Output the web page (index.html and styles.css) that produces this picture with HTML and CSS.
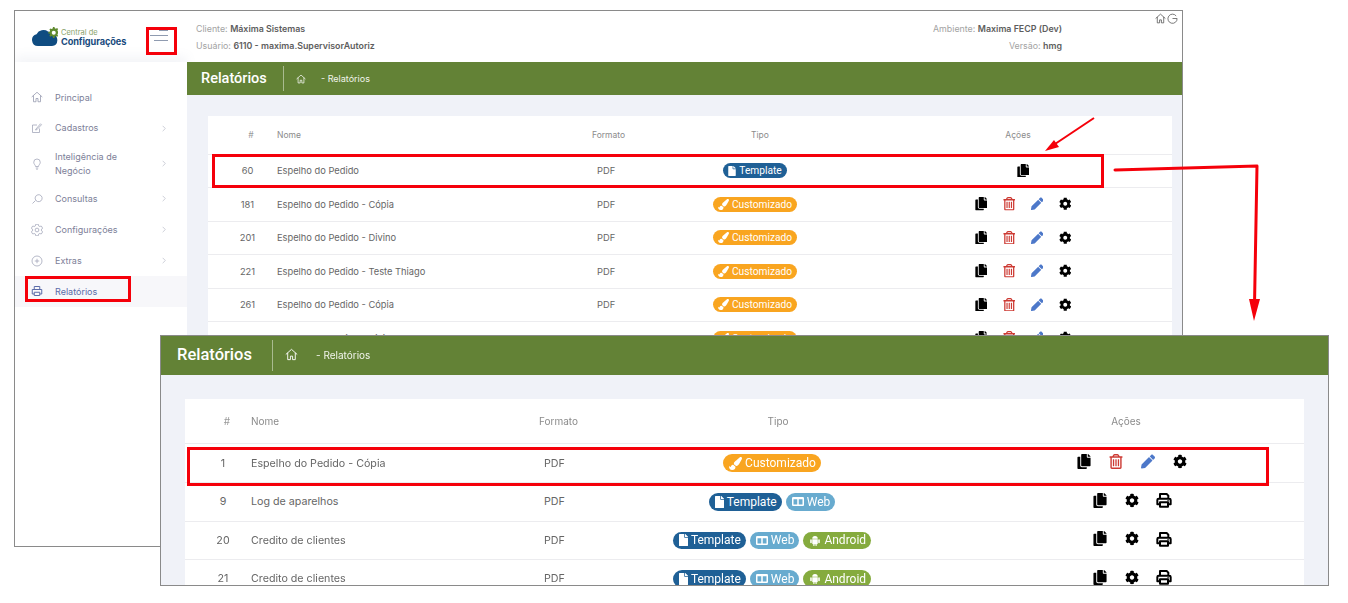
FILE: index.html
```html
<!DOCTYPE html>
<html lang="pt-BR">
<head>
<meta charset="utf-8">
<title>Relatórios</title>
<link rel="stylesheet" href="styles.css">
</head>
<body>
<svg class="defs" aria-hidden="true">
  <symbol id="i-copy" viewBox="0 0 448 512"><path d="M320 448v40c0 13.255-10.745 24-24 24H24c-13.255 0-24-10.745-24-24V120c0-13.255 10.745-24 24-24h72v296c0 30.879 25.121 56 56 56h168zm0-344V0H152c-13.255 0-24 10.745-24 24v368c0 13.255 10.745 24 24 24h272c13.255 0 24-10.745 24-24V128H344c-13.2 0-24-10.8-24-24zm120.971-31.029L375.029 7.029A24 24 0 0 0 358.059 0H352v96h96v-6.059a24 24 0 0 0-7.029-16.97z"/></symbol>
  <symbol id="i-trash" viewBox="0 0 448 512"><path d="M432 80h-82.41l-34-56.7A48 48 0 0 0 274.41 0H173.59a48 48 0 0 0-41.16 23.3L98.41 80H16A16 16 0 0 0 0 96v16a16 16 0 0 0 16 16h16v336a48 48 0 0 0 48 48h288a48 48 0 0 0 48-48V128h16a16 16 0 0 0 16-16V96a16 16 0 0 0-16-16zM171.84 50.91A6 6 0 0 1 177 48h94a6 6 0 0 1 5.15 2.91L293.61 80H154.39zM368 464H80V128h288z"/><rect x="118" y="176" width="44" height="240" rx="12"/><rect x="202" y="176" width="44" height="240" rx="12"/><rect x="286" y="176" width="44" height="240" rx="12"/></symbol>
  <symbol id="i-pencil" viewBox="0 0 512 512"><path d="M497.9 142.1l-46.1 46.1c-4.7 4.7-12.3 4.7-17 0l-111-111c-4.7-4.7-4.7-12.3 0-17l46.1-46.1c18.7-18.7 49.1-18.7 67.9 0l60.1 60.1c18.8 18.7 18.8 49.1 0 67.9zM284.2 99.8L21.6 362.4.4 483.9c-2.9 16.4 11.4 30.6 27.8 27.8l121.5-21.3 262.6-262.6c4.7-4.7 4.7-12.3 0-17l-111-111c-4.8-4.7-12.4-4.7-17.1 0z"/></symbol>
  <symbol id="i-cog" viewBox="0 0 512 512"><path d="M487.4 315.7l-42.6-24.6c4.3-23.2 4.3-47 0-70.2l42.6-24.6c4.9-2.8 7.1-8.6 5.5-14-11.1-35.6-30-67.8-54.7-94.6-3.8-4.1-10-5.1-14.8-2.3L380.8 110c-17.9-15.4-38.5-27.3-60.8-35.1V25.8c0-5.6-3.9-10.5-9.4-11.7-36.7-8.2-74.3-7.8-109.2 0-5.5 1.2-9.4 6.1-9.4 11.7V75c-22.2 7.9-42.8 19.8-60.8 35.1L88.7 85.5c-4.9-2.8-11-1.9-14.8 2.3-24.7 26.7-43.6 58.9-54.7 94.6-1.7 5.4.6 11.2 5.5 14L67.3 221c-4.3 23.2-4.3 47 0 70.2l-42.6 24.6c-4.9 2.8-7.1 8.6-5.5 14 11.1 35.6 30 67.8 54.7 94.6 3.8 4.1 10 5.1 14.8 2.3l42.6-24.6c17.9 15.4 38.5 27.3 60.8 35.1v49.2c0 5.6 3.9 10.5 9.4 11.7 36.7 8.2 74.3 7.8 109.2 0 5.5-1.2 9.4-6.1 9.4-11.7v-49.2c22.2-7.9 42.8-19.8 60.8-35.1l42.6 24.6c4.9 2.8 11 1.9 14.8-2.3 24.7-26.7 43.6-58.9 54.7-94.6 1.5-5.5-.7-11.3-5.6-14.1zM256 336c-44.1 0-80-35.9-80-80s35.9-80 80-80 80 35.9 80 80-35.9 80-80 80z"/></symbol>
  <symbol id="i-print" viewBox="0 0 24 24"><path fill="none" stroke="currentColor" stroke-width="3" stroke-linejoin="round" d="M6 10V3h10l2.500 2.500V10M5.500 18.500H2V12a2 2 0 0 1 2-2h16a2 2 0 0 1 2 2v6.500h-3.500M6 15.500h12v6.500H6z"/><rect x="17" y="12" width="2.200" height="2.200" rx="1"/></symbol>
  <symbol id="i-file" viewBox="0 0 384 512"><path d="M224 136V0H24C10.7 0 0 10.7 0 24v464c0 13.3 10.7 24 24 24h336c13.3 0 24-10.7 24-24V160H248c-13.2 0-24-10.8-24-24zm160-14.1v6.1H256V0h6.1c6.4 0 12.5 2.5 17 7l97.9 98c4.5 4.5 7 10.6 7 16.9z"/></symbol>
  <symbol id="i-brush" viewBox="0 0 512 512"><path d="M167.02 309.34c-40.12 2.58-76.53 17.86-97.19 72.3-2.35 6.21-8 9.98-14.59 9.98-11.11 0-45.46-27.67-55.25-34.35C0 439.62 37.93 512 128 512c75.86 0 128-43.77 128-120.19 0-3.11-.65-6.08-.97-9.13l-88.01-73.34zM457.89 0c-15.16 0-29.37 6.71-40.21 16.45C213.27 199.05 192 203.34 192 257.09c0 13.7 3.25 26.76 8.73 38.7l63.82 53.18c7.21 1.8 14.64 3.03 22.39 3.03 62.11 0 98.11-45.47 211.16-256.46 7.38-14.35 13.9-29.85 13.9-45.99C512 20.64 486 0 457.89 0z"/></symbol>
  <symbol id="i-cols" viewBox="0 0 16 14"><path fill-rule="evenodd" d="M1.5 1h13A1.5 1.5 0 0 1 16 2.500v9a1.500 1.500 0 0 1-1.500 1.500h-13A1.500 1.500 0 0 1 0 11.500v-9A1.500 1.500 0 0 1 1.500 1zM2 4v7h5V4zm7 0v7h5V4z"/></symbol>
  <symbol id="i-android" viewBox="0 0 16 16"><path d="M4 5.500a4 4 0 0 1 8 0zM4 6.300h8v6a1 1 0 0 1-1 1h-.6V16H8.800v-2.700H7.200V16H5.600v-2.700H5a1 1 0 0 1-1-1z"/><rect x="1" y="6" width="2.300" height="6" rx="1.150"/><rect x="12.700" y="6" width="2.300" height="6" rx="1.150"/></symbol>
  <symbol id="i-home" viewBox="0 0 24 24"><path fill="none" stroke="currentColor" stroke-width="1.700" stroke-linejoin="round" stroke-linecap="round" d="M2 11.500 12 2.500l10 9M5 9.500V21.500h5v-6.500h4v6.500h5V9.500"/></symbol>
  <symbol id="i-chev" viewBox="0 0 6 10"><path fill="none" stroke="currentColor" stroke-width="1" d="M1 1l4 4-4 4"/></symbol>
</svg>

<main class="stage">
  <section class="win win-back">
    <header class="top">
      <div class="logo">
        <svg class="cloud" viewBox="0 0 26 19"><path fill="#0f4c81" d="M6 19a6 6 0 0 1-1.500-11.800A8 8 0 0 1 16 4.500a5.500 5.500 0 0 1 4.500 3 5.800 5.800 0 0 1-.5 11.500z"/><g transform="translate(15 0)"><path fill="#5f8a2e" d="M6 0h1.500l.3 1.300 1.100.5 1.200-.7 1 1-.7 1.200.5 1.100 1.300.3v1.500l-1.300.3-.5 1.100.7 1.200-1 1-1.200-.7-1.100.5-.3 1.300H6l-.3-1.300-1.100-.5-1.200.7-1-1 .7-1.200-.5-1.100L1.300 6.500V5l1.300-.3.5-1.100-.7-1.200 1-1 1.200.7 1.100-.5z"/><circle cx="6.750" cy="5.750" r="2" fill="#fff"/></g></svg>
        <div class="logo-text"><span class="logo-small">Central de</span><strong class="logo-big">Configurações</strong></div>
      </div>
      <div class="burger"><i class="b1"></i><i class="b2"></i><i class="b3"></i></div>
      <div class="info">
        <p>Cliente: <b>Máxima Sistemas</b></p>
        <p>Usuário: <b>6110 - maxima.SupervisorAutoriz</b></p>
      </div>
      <div class="info info-right">
        <p>Ambiente: <b>Maxima FECP (Dev)</b></p>
        <p>Versão: <b>hmg</b></p>
      </div>
      <div class="top-icons">
        <svg class="ti"><use href="#i-home"/></svg>
        <svg class="ti" viewBox="0 0 24 24"><path fill="none" stroke="currentColor" stroke-width="1.700" d="M20 6.500A10 10 0 1 0 22 12H12"/></svg>
      </div>
    </header>
    <div class="body">
      <nav class="side">
        <a class="item"><svg class="si"><use href="#i-home"/></svg><span>Principal</span></a>
        <a class="item"><svg class="si" viewBox="0 0 24 24"><path fill="none" stroke="currentColor" stroke-width="1.500" d="M17 13v8H3V6h9M10 14l-1 2 2.500-.5L21 5.500 19 3.500z"/></svg><span>Cadastros</span><svg class="chev"><use href="#i-chev"/></svg></a>
        <a class="item item-tall"><svg class="si" viewBox="0 0 24 24"><path fill="none" stroke="currentColor" stroke-width="1.500" d="M9 17c0-3-3.500-4.500-3.500-8.500a6.500 6.500 0 0 1 13 0C18.500 12.500 15 14 15 17zM9.500 20h5M10.500 22.500h3"/></svg><span>Inteligência de Negócio</span><svg class="chev"><use href="#i-chev"/></svg></a>
        <a class="item"><svg class="si" viewBox="0 0 24 24"><path fill="none" stroke="currentColor" stroke-width="1.500" d="M10 15a7 7 0 1 0 4-11.500A7 7 0 0 0 10 15zM9 15l-6 6"/></svg><span>Consultas</span><svg class="chev"><use href="#i-chev"/></svg></a>
        <a class="item"><svg class="si" viewBox="0 0 512 512"><path fill="none" stroke="currentColor" stroke-width="32" d="M487.4 315.7l-42.6-24.6c4.300-23.200 4.300-47 0-70.200l42.600-24.600c4.900-2.800 7.100-8.600 5.500-14-11.100-35.600-30-67.800-54.700-94.600-3.800-4.100-10-5.100-14.800-2.300L380.800 110c-17.900-15.400-38.500-27.300-60.800-35.100V25.800c0-5.600-3.900-10.500-9.400-11.700-36.700-8.200-74.300-7.800-109.200 0-5.500 1.200-9.400 6.100-9.400 11.700V75c-22.200 7.900-42.800 19.800-60.800 35.100L88.700 85.500c-4.900-2.800-11-1.900-14.800 2.300-24.700 26.700-43.600 58.900-54.700 94.600-1.700 5.400.6 11.200 5.500 14L67.300 221c-4.300 23.200-4.300 47 0 70.200l-42.600 24.600c-4.900 2.800-7.100 8.600-5.500 14 11.100 35.600 30 67.800 54.700 94.600 3.800 4.100 10 5.100 14.800 2.300l42.600-24.600c17.900 15.400 38.500 27.300 60.800 35.100v49.200c0 5.600 3.900 10.500 9.400 11.700 36.700 8.200 74.300 7.800 109.200 0 5.500-1.200 9.400-6.100 9.400-11.700v-49.200c22.200-7.900 42.800-19.800 60.800-35.100l42.600 24.600c4.900 2.800 11 1.900 14.800-2.300 24.700-26.700 43.600-58.900 54.700-94.600 1.500-5.500-.7-11.300-5.600-14.100z"/><circle cx="256" cy="256" r="80" fill="none" stroke="currentColor" stroke-width="32"/></svg><span>Configurações</span><svg class="chev"><use href="#i-chev"/></svg></a>
        <a class="item"><svg class="si" viewBox="0 0 24 24"><circle cx="12" cy="12" r="10" fill="none" stroke="currentColor" stroke-width="1.500"/><path fill="none" stroke="currentColor" stroke-width="1.500" d="M12 7.500v9M7.500 12h9"/></svg><span>Extras</span><svg class="chev"><use href="#i-chev"/></svg></a>
        <a class="item item-active"><svg class="si" viewBox="0 0 24 24"><path fill="none" stroke="currentColor" stroke-width="2" d="M6.500 9V3h11v6M6.500 18H2.500v-9h19v9h-4M6.500 14.500h11V21h-11z"/></svg><span>Relatórios</span></a>
      </nav>
      <div class="content">
        <div class="bar">
          <h1 class="bar-title">Relatórios</h1>
          <svg class="bar-home"><use href="#i-home"/></svg>
          <span class="bar-crumb">- Relatórios</span>
        </div>
        <div class="panel">
          <div class="card">
            <div class="row head"><span class="c-num">#</span><span class="c-name">Nome</span><span class="c-fmt">Formato</span><span class="c-type">Tipo</span><span class="c-act">Ações</span></div>
            <div class="row"><span class="c-num">60</span><span class="c-name">Espelho do Pedido</span><span class="c-fmt">PDF</span><span class="c-type"><span class="tag t-template"><svg class="ic"><use href="#i-file"/></svg>Template</span></span><span class="c-act"><svg class="act"><use href="#i-copy"/></svg></span></div>
            <div class="row"><span class="c-num">181</span><span class="c-name">Espelho do Pedido - Cópia</span><span class="c-fmt">PDF</span><span class="c-type"><span class="tag t-custom"><svg class="ic ic-brush"><use href="#i-brush"/></svg>Customizado</span></span><span class="c-act"><svg class="act"><use href="#i-copy"/></svg><svg class="act red"><use href="#i-trash"/></svg><svg class="act blue"><use href="#i-pencil"/></svg><svg class="act"><use href="#i-cog"/></svg></span></div>
            <div class="row"><span class="c-num">201</span><span class="c-name">Espelho do Pedido - Divino</span><span class="c-fmt">PDF</span><span class="c-type"><span class="tag t-custom"><svg class="ic ic-brush"><use href="#i-brush"/></svg>Customizado</span></span><span class="c-act"><svg class="act"><use href="#i-copy"/></svg><svg class="act red"><use href="#i-trash"/></svg><svg class="act blue"><use href="#i-pencil"/></svg><svg class="act"><use href="#i-cog"/></svg></span></div>
            <div class="row"><span class="c-num">221</span><span class="c-name">Espelho do Pedido - Teste Thiago</span><span class="c-fmt">PDF</span><span class="c-type"><span class="tag t-custom"><svg class="ic ic-brush"><use href="#i-brush"/></svg>Customizado</span></span><span class="c-act"><svg class="act"><use href="#i-copy"/></svg><svg class="act red"><use href="#i-trash"/></svg><svg class="act blue"><use href="#i-pencil"/></svg><svg class="act"><use href="#i-cog"/></svg></span></div>
            <div class="row"><span class="c-num">261</span><span class="c-name">Espelho do Pedido - Cópia</span><span class="c-fmt">PDF</span><span class="c-type"><span class="tag t-custom"><svg class="ic ic-brush"><use href="#i-brush"/></svg>Customizado</span></span><span class="c-act"><svg class="act"><use href="#i-copy"/></svg><svg class="act red"><use href="#i-trash"/></svg><svg class="act blue"><use href="#i-pencil"/></svg><svg class="act"><use href="#i-cog"/></svg></span></div>
            <div class="row"><span class="c-num">281</span><span class="c-name">Espelho do Pedido - Divino</span><span class="c-fmt">PDF</span><span class="c-type"><span class="tag t-custom"><svg class="ic ic-brush"><use href="#i-brush"/></svg>Customizado</span></span><span class="c-act"><svg class="act"><use href="#i-copy"/></svg><svg class="act red"><use href="#i-trash"/></svg><svg class="act blue"><use href="#i-pencil"/></svg><svg class="act"><use href="#i-cog"/></svg></span></div>
          </div>
        </div>
      </div>
    </div>
  </section>

  <div class="mark mark-burger"></div>
  <div class="mark mark-row"></div>
  <div class="mark mark-side"></div>
  <svg class="arrows" viewBox="0 0 1348 603">
    <path class="arrow-line" d="M1094 118 1052 146"/>
    <path class="arrow-head" d="M1045 151 1054 140 1059 147z"/>
    <path class="arrow-line arrow-thick" d="M1115 170 1257 166 1254.500 305"/>
    <path class="arrow-head" d="M1254 321 1249 299 1260 299z"/>
  </svg>

  <section class="win win-front">
    <div class="bar">
      <h1 class="bar-title">Relatórios</h1>
      <svg class="bar-home"><use href="#i-home"/></svg>
      <span class="bar-crumb">- Relatórios</span>
    </div>
    <div class="panel">
      <div class="card">
        <div class="row head"><span class="c-num">#</span><span class="c-name">Nome</span><span class="c-fmt">Formato</span><span class="c-type">Tipo</span><span class="c-act">Ações</span></div>
        <div class="row"><span class="c-num">1</span><span class="c-name">Espelho do Pedido - Cópia</span><span class="c-fmt">PDF</span><span class="c-type"><span class="tag t-custom"><svg class="ic ic-brush"><use href="#i-brush"/></svg>Customizado</span></span><span class="c-act"><svg class="act"><use href="#i-copy"/></svg><svg class="act red"><use href="#i-trash"/></svg><svg class="act blue"><use href="#i-pencil"/></svg><svg class="act"><use href="#i-cog"/></svg></span></div>
        <div class="row"><span class="c-num">9</span><span class="c-name">Log de aparelhos</span><span class="c-fmt">PDF</span><span class="c-type"><span class="tag t-template"><svg class="ic"><use href="#i-file"/></svg>Template</span><span class="tag t-web"><svg class="ic ic-wide"><use href="#i-cols"/></svg>Web</span></span><span class="c-act"><svg class="act"><use href="#i-copy"/></svg><svg class="act"><use href="#i-cog"/></svg><svg class="act act-print"><use href="#i-print"/></svg></span></div>
        <div class="row"><span class="c-num">20</span><span class="c-name">Credito de clientes</span><span class="c-fmt">PDF</span><span class="c-type"><span class="tag t-template"><svg class="ic"><use href="#i-file"/></svg>Template</span><span class="tag t-web"><svg class="ic ic-wide"><use href="#i-cols"/></svg>Web</span><span class="tag t-android"><svg class="ic ic-wide"><use href="#i-android"/></svg>Android</span></span><span class="c-act"><svg class="act"><use href="#i-copy"/></svg><svg class="act"><use href="#i-cog"/></svg><svg class="act act-print"><use href="#i-print"/></svg></span></div>
        <div class="row"><span class="c-num">21</span><span class="c-name">Credito de clientes</span><span class="c-fmt">PDF</span><span class="c-type"><span class="tag t-template"><svg class="ic"><use href="#i-file"/></svg>Template</span><span class="tag t-web"><svg class="ic ic-wide"><use href="#i-cols"/></svg>Web</span><span class="tag t-android"><svg class="ic ic-wide"><use href="#i-android"/></svg>Android</span></span><span class="c-act"><svg class="act"><use href="#i-copy"/></svg><svg class="act"><use href="#i-cog"/></svg><svg class="act act-print"><use href="#i-print"/></svg></span></div>
      </div>
    </div>
  </section>

  <div class="mark mark-front"></div>
</main>
</body>
</html>
```

FILE: styles.css
```css
* { box-sizing: border-box; }
html, body { margin: 0; height: 603px; overflow: hidden; background: #fff; }
body { font-family: Inter, "Liberation Sans", sans-serif; color: #555; }
.defs { position: absolute; width: 0; height: 0; }
.stage { position: relative; width: 1348px; height: 603px; overflow: hidden; filter: blur(0.35px); }
p, h1 { margin: 0; }

/* windows on the canvas */
.win { position: absolute; overflow: hidden; background: #fff; border: 1px solid #8a8a8a; }
.win-back { left: 14px; top: 10px; width: 1169px; height: 537px; display: flex; flex-direction: column; }
.win-front { left: 160px; top: 335px; width: 1169px; height: 251px; }

/* header */
.top { height: 51px; flex: none; display: flex; align-items: center; background: #fff; }
.logo { display: flex; align-items: center; gap: 3px; padding-left: 17px; }
.cloud { width: 26px; height: 19px; }
.logo-text { width: 66px; display: flex; flex-direction: column; line-height: 9px; margin-top: 1px; }
.logo-small { font-size: 7.5px; color: #8aa36c; }
.logo-big { font-size: 9.2px; font-weight: 700; color: #174a7c; white-space: nowrap; letter-spacing: -0.1px; }
.burger { width: 18px; margin-left: 23px; margin-top: -2px; display: flex; flex-direction: column; align-items: flex-end; gap: 4px; }
.burger i { display: block; height: 1px; background: #8f9bb0; }
.b1 { width: 9px; } .b2 { width: 18px; } .b3 { width: 14px; }
.info { margin-left: 28px; font-size: 8.85px; line-height: 17px; color: #a3a3a3; }
.info b { color: #5d5d5d; font-weight: 600; }
.info-right { margin-left: auto; text-align: right; }
.top-icons { align-self: flex-start; margin: 2px 4px 0 93px; display: flex; gap: 1px; color: #555; }
.ti { width: 11px; height: 11px; }

/* sidebar */
.body { flex: 1; display: flex; min-height: 0; }
.side { width: 172px; flex: none; padding-top: 20px; background: #fff; box-shadow: 0 -6px 10px rgba(120,130,160,.08); }
.item { display: flex; align-items: center; height: 30.8px; padding-left: 16px; font-size: 9px; line-height: 13.5px; color: #7d8098; }
.item span { width: 76px; margin-left: 12px; white-space: nowrap; }
.item-tall { height: 40px; }
.item-tall span { white-space: normal; }
.item-active { background: #f7f7fa; color: #5a6ba8; }
.si { width: 12px; height: 12px; flex: none; color: #9da1b5; }
.item-active .si { color: #5a6ba8; }
.chev { width: 4px; height: 7px; margin-left: 31px; color: #b5b8c6; }

/* content */
.content { flex: 1; min-width: 0; display: flex; flex-direction: column; background: #f0f2f8; }
.bar { display: flex; align-items: center; height: 33px; padding-left: 14px; background: #638236; color: #fff; flex: none; }
.bar-title { font: 500 14.5px/25px Roboto, sans-serif; height: 25px; width: 83px; border-right: 1px solid #a9bb8f; }
.bar-home { width: 10px; height: 10px; margin-left: 12px; }
.bar-crumb { font-size: 9px; margin-left: 15px; color: #f2f5ec; }
.win-front .bar { height: 39px; padding-left: 16px; }
.win-front .bar-title { font-size: 16.5px; height: 31px; line-height: 29px; width: 96px; }
.win-front .bar-home { width: 13px; height: 13px; margin: -2px 0 0 12px; }
.win-front .bar-crumb { font-size: 10px; margin: -2px 0 0 18px; }

.panel { flex: 1; background: #f0f2f8; padding: 21px 10px 0 21px; }
.win-front .panel { padding: 24px 24px 0 24px; }
.card { background: #fff; }

/* table rows */
.row {
  display: grid; align-items: center;
  grid-template-columns: 26px 323px 53px 230px 296px;
  padding-left: 30px; height: 33.5px;
  border-bottom: 1px solid #ececef;
  font-size: 9.3px; color: #666; white-space: nowrap;
}
.c-num { text-align: center; padding-right: 7px; }
.c-name { padding-left: 13px; }
.c-fmt { padding-left: 10px; }
.c-type { display: flex; justify-content: center; gap: 4px; }
.c-act { display: flex; justify-content: center; align-items: center; padding-left: 10px; gap: 15.5px; }
.head { height: 38.5px; color: #8b8b8b; font-size: 8.5px; }
.head .c-num { color: #9a9a9a; padding-right: 0; }
.head .c-fmt { padding-left: 5px; }
.head .c-type { padding-left: 10px; }
.head .c-act { padding-left: 0; }

.act { width: 12.5px; height: 13.5px; flex: none; fill: #000; color: #000; margin-top: -1px; }
.red { fill: #cd3a33; }
.blue { fill: #4d78c9; }

/* tags */
.tag { display: inline-flex; align-items: center; gap: 3px; height: 15px; padding: 0 5px; border-radius: 8px; color: #fff; font-size: 10.2px; font-family: Roboto, sans-serif; }
.ic { width: 8px; height: 10px; fill: #fff; flex: none; }
.ic-brush { width: 11px; height: 11px; }
.t-template { background: #1f6096; }
.t-custom { background: #f9a520; }
.t-web { background: #68abcf; }
.t-android { background: #85ab3e; }

/* front window scale */
.win-front .row { grid-template-columns: 24px 295px 62px 352px 356px; height: 38.6px; font-size: 10.7px; }
.win-front .c-num { padding-right: 8px; }
.win-front .head { height: 45.4px; font-size: 10px; }
.win-front .head .c-num { padding-right: 0; }
.win-front .c-name { padding-left: 12px; }
.win-front .head .c-type { padding-left: 12px; }
.win-front .c-act { padding-left: 11px; gap: 18px; }
.win-front .head .c-act { padding-left: 0; }
.win-front .act { width: 14px; height: 15px; margin-top: -3px; }
.win-front .act-print { width: 16px; height: 16px; margin-left: -1px; margin-right: -1px; }
.win-front .tag { height: 17.5px; font-size: 12px; padding: 0 5px 0 6px; border-radius: 9px; }
.win-front .ic { width: 9px; height: 12px; }
.win-front .ic-wide { width: 12px; height: 11px; }
.win-front .ic-brush { width: 13px; height: 13px; }

/* red annotations */
.mark { position: absolute; border: 3px solid #f5000a; }
.mark-burger { left: 146px; top: 27px; width: 31px; height: 28px; }
.mark-row { left: 212px; top: 154px; width: 892px; height: 34px; }
.mark-side { left: 25px; top: 276px; width: 106px; height: 26px; }
.mark-front { left: 187px; top: 447px; width: 1082px; height: 39px; }
.arrows { position: absolute; left: 0; top: 0; width: 1348px; height: 603px; }
.arrow-line { fill: none; stroke: #f5000a; stroke-width: 2; }
.arrow-thick { stroke-width: 3; stroke-linecap: round; stroke-linejoin: round; }
.arrow-head { fill: #f5000a; }
```
